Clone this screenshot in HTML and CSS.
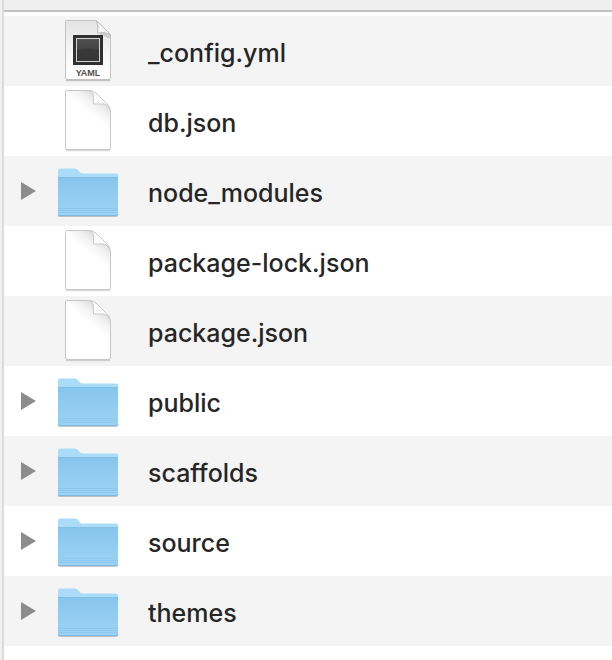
FILE: index.html
```html
<!DOCTYPE html>
<html lang="en">
<head>
<meta charset="utf-8">
<title>Files</title>
<link rel="stylesheet" href="styles.css">
</head>
<body>
<svg class="defs" aria-hidden="true">
  <defs>
    <linearGradient id="folder-front" x1="0" y1="0" x2="0" y2="1">
      <stop offset="0" stop-color="#87c5ed"/>
      <stop offset="1" stop-color="#9dd3f5"/>
    </linearGradient>
    <linearGradient id="page-shade" gradientUnits="userSpaceOnUse" x1="46" y1="12" x2="34" y2="27">
      <stop offset="0" stop-color="#dcdcdc"/>
      <stop offset="0.5" stop-color="#f3f3f3"/>
      <stop offset="1" stop-color="#ffffff"/>
    </linearGradient>
    <linearGradient id="yaml-shade" x1="0" y1="0" x2="0" y2="1">
      <stop offset="0" stop-color="#e3e3e3"/>
      <stop offset="0.6" stop-color="#f8f8f8"/>
      <stop offset="1" stop-color="#ffffff"/>
    </linearGradient>
    <linearGradient id="curl" x1="0" y1="1" x2="1" y2="0">
      <stop offset="0" stop-color="#ffffff"/>
      <stop offset="0.5" stop-color="#f2f2f2"/>
      <stop offset="1" stop-color="#d0d0d0"/>
    </linearGradient>
    <linearGradient id="screen" x1="0" y1="0" x2="0" y2="1">
      <stop offset="0" stop-color="#505050"/>
      <stop offset="1" stop-color="#363636"/>
    </linearGradient>
    <symbol id="folder" viewBox="0 0 66 70">
      <path d="M3 58V60Q3 61 5 61H61Q63 61 63.500 58" fill="#000" opacity=".22"/>
      <path d="M3 14.500Q3 12.500 5 12.500H20Q22 12.500 23 14L25 16.500Q26 17.500 27.500 17.500H61Q63 17.500 63 19.500V30H3Z" fill="#aadbf8"/>
      <path d="M3 22Q3 21 4 21H62Q63 21 63 22V58Q63 60 61 60H5Q3 60 3 58Z" fill="url(#folder-front)"/>
      <path d="M3 21.500H63" stroke="#80bfe6" stroke-width="1"/>
      <path d="M3 52.500H63M3 54.500H63M3 56.500H63" stroke="#8ec8ed" stroke-width="1"/>
      <path d="M3 58.500Q3.500 59.500 5 59.500H61Q62.500 59.500 63 58.500" fill="none" stroke="#7fb8e0"/>
    </symbol>
    <symbol id="page" viewBox="0 0 66 70">
      <path d="M11 64.500H55" stroke="#000" stroke-width="1.500" opacity=".14"/>
      <path d="M11.500 4.500H33Q38 4.500 42 8L51 17Q55.500 21 55.500 26V62Q55.500 63.500 54 63.500H12Q10.500 63.500 10.500 62V5.500Q10.500 4.500 11.500 4.500Z" fill="url(#page-shade)" stroke="#c6c6c6"/>
      <path d="M34 4.500Q38.500 6 38.500 10V18H48Q52 18 55 23Q54 20 51 17L42 8Q38 4.500 34 4.500Z" fill="#fcfcfc" stroke="#cbcbcb"/>
    </symbol>
    <symbol id="yaml" viewBox="0 0 66 70">
      <path d="M11 64.500H55" stroke="#000" stroke-width="1.500" opacity=".2"/>
      <path d="M11.500 4.500H41.500L55.500 18.500V62Q55.500 63.500 54 63.500H12Q10.500 63.500 10.500 62V5.500Q10.500 4.500 11.500 4.500Z" fill="url(#yaml-shade)" stroke="#c2c2c2"/>
      <path d="M42 5Q44 11 42.500 17.500Q49 15.500 55 18.500V23L42 17Z" fill="#bcbcbc" opacity=".6"/>
      <path d="M41.500 4.500Q44 11 42.500 17Q49 15.500 55.500 18.500Z" fill="url(#curl)" stroke="#bdbdbd"/>
      <rect x="18" y="19" width="30" height="30" fill="#303030"/>
      <rect x="21.500" y="22.500" width="23" height="23" fill="url(#screen)" stroke="#d5d5d5"/>
      <path d="M22 34Q33 31 44 34V45H22Z" fill="#333" opacity=".6"/>
      <text class="badge" x="33" y="60" text-anchor="middle">YAML</text>
    </symbol>
  </defs>
</svg>
<main class="window">
  <div class="header"></div>
  <ul class="files">
    <li class="row"><svg class="icon" aria-hidden="true"><use href="#yaml"/></svg><span class="name">_config.yml</span></li>
    <li class="row"><svg class="icon" aria-hidden="true"><use href="#page"/></svg><span class="name">db.json</span></li>
    <li class="row"><button class="toggle" aria-labelledby="n1"></button><svg class="icon" aria-hidden="true"><use href="#folder"/></svg><span class="name" id="n1">node_modules</span></li>
    <li class="row"><svg class="icon" aria-hidden="true"><use href="#page"/></svg><span class="name">package-lock.json</span></li>
    <li class="row"><svg class="icon" aria-hidden="true"><use href="#page"/></svg><span class="name">package.json</span></li>
    <li class="row"><button class="toggle" aria-labelledby="n2"></button><svg class="icon" aria-hidden="true"><use href="#folder"/></svg><span class="name" id="n2">public</span></li>
    <li class="row"><button class="toggle" aria-labelledby="n3"></button><svg class="icon" aria-hidden="true"><use href="#folder"/></svg><span class="name" id="n3">scaffolds</span></li>
    <li class="row"><button class="toggle" aria-labelledby="n4"></button><svg class="icon" aria-hidden="true"><use href="#folder"/></svg><span class="name" id="n4">source</span></li>
    <li class="row"><button class="toggle" aria-labelledby="n5"></button><svg class="icon" aria-hidden="true"><use href="#folder"/></svg><span class="name" id="n5">themes</span></li>
  </ul>
</main>
</body>
</html>
```
FILE: styles.css
```css
* {
  box-sizing: border-box;
}

body {
  margin: 0;
  padding-left: 2px;
  background: #f1f1f1;
  font-family: Inter, "Liberation Sans", sans-serif;
  color: #262626;
}

.defs {
  position: absolute;
  width: 0;
  height: 0;
}

.window {
  min-height: 100vh;
  border-left: 2px solid #dbdcdd;
  background: #fff;
}

.header {
  height: 12px;
  border-bottom: 2px solid #c0c0c0;
  background: #efefef;
}

.files {
  margin: 0;
  padding: 4px 0 0;
  list-style: none;
}

.row {
  display: grid;
  grid-template-columns: 51px 66px 1fr;
  align-items: center;
  height: 70px;
}

.row:nth-child(odd) {
  background: #f4f4f4;
}

.toggle {
  grid-column: 1;
  width: 15px;
  height: 18px;
  margin: 0 0 0 17px;
  padding: 0;
  border: 0;
  background: #8c8c8c;
  clip-path: polygon(0 0, 100% 50%, 0 100%);
}

.icon {
  grid-column: 2;
  width: 66px;
  height: 70px;
}

.badge {
  font: bold 9px "Liberation Sans", sans-serif;
  fill: #505050;
}

.name {
  padding: 4px 0 0 27px;
  font-size: 25px;
  font-weight: 500;
  line-height: 32px;
  white-space: nowrap;
}
```
